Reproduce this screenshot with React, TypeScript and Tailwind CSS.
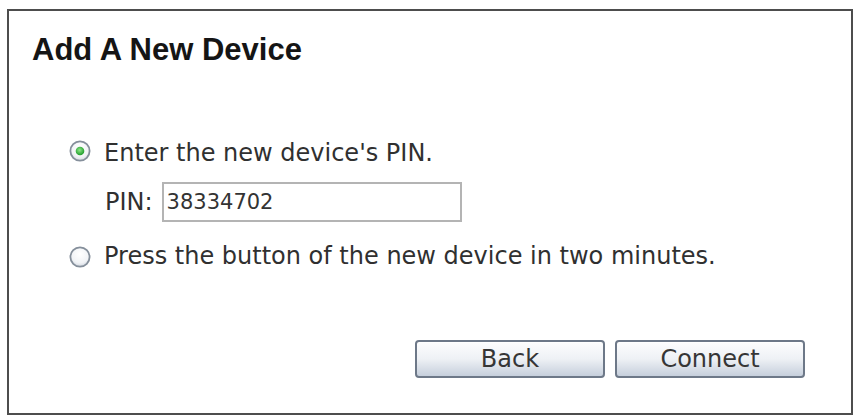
import React from 'react'

function Radio({ checked, id }: { checked?: boolean; id: string }) {
  return (
    <svg width="22" height="22" viewBox="0 0 22 22" aria-hidden className="shrink-0">
      <defs>
        <radialGradient id={`bg-${id}`} cx="50%" cy="35%" r="65%">
          <stop offset="0%" stopColor="#ffffff" />
          <stop offset="70%" stopColor="#f1f3f6" />
          <stop offset="100%" stopColor="#d3d9e1" />
        </radialGradient>
        <radialGradient id={`dot-${id}`} cx="45%" cy="40%" r="60%">
          <stop offset="0%" stopColor="#8ee887" />
          <stop offset="100%" stopColor="#1c9a2a" />
        </radialGradient>
      </defs>
      <circle cx="11" cy="11" r="9.6" fill={`url(#bg-${id})`} stroke="#858f9b" strokeWidth="1.8" />
      {checked && <circle cx="11" cy="11" r="4.3" fill={`url(#dot-${id})`} />}
    </svg>
  )
}

const btn =
  'flex h-[38px] w-[190px] items-center justify-center rounded-[4px] border-2 border-[#6d7888] bg-gradient-to-b from-[#fdfdfe] via-[#eef1f5] to-[#c6cfdc] text-[24px] leading-[28px] text-[#363636] shadow-[inset_0_1px_0_#fff]'

export default function App() {
  return (
    <div className="h-[418px] w-[856px] bg-white pl-[7px] pt-[9px] font-['DejaVu_Sans',Verdana,sans-serif]">
      <div className="flex h-[406px] w-[846px] flex-col border-2 border-[#4d4d4d] bg-white">
        <h1 className="pl-[23px] pt-[21px] font-['Liberation_Sans',Arial,sans-serif] text-[31px] font-bold leading-[36px] text-[#151515]">
          Add A New Device
        </h1>

        <div className="mt-[71px] flex flex-col pl-[60px] text-[24px] leading-[28px] text-[#303030]">
          <label className="flex items-start gap-[13px]">
            <span className="mt-[1px]">
              <Radio checked id="a" />
            </span>
            <span>Enter the new device's PIN.</span>
          </label>
          <div className="mt-[15px] flex items-center pl-[36px]">
            <span>PIN:</span>
            <div className="ml-[9px] flex h-[40px] w-[300px] items-center border-2 border-[#b4b4b4] pl-[3px] text-[21px] text-[#333]">
              38334702
            </div>
          </div>
          <label className="mt-[20px] flex items-start gap-[13px]">
            <span className="mt-[4px]">
              <Radio id="b" />
            </span>
            <span>Press the button of the new device in two minutes.</span>
          </label>
        </div>

        <div className="mt-auto mb-[35px] flex justify-end gap-[10px] pr-[46px]">
          <button className={btn}>Back</button>
          <button className={btn}>Connect</button>
        </div>
      </div>
    </div>
  )
}
